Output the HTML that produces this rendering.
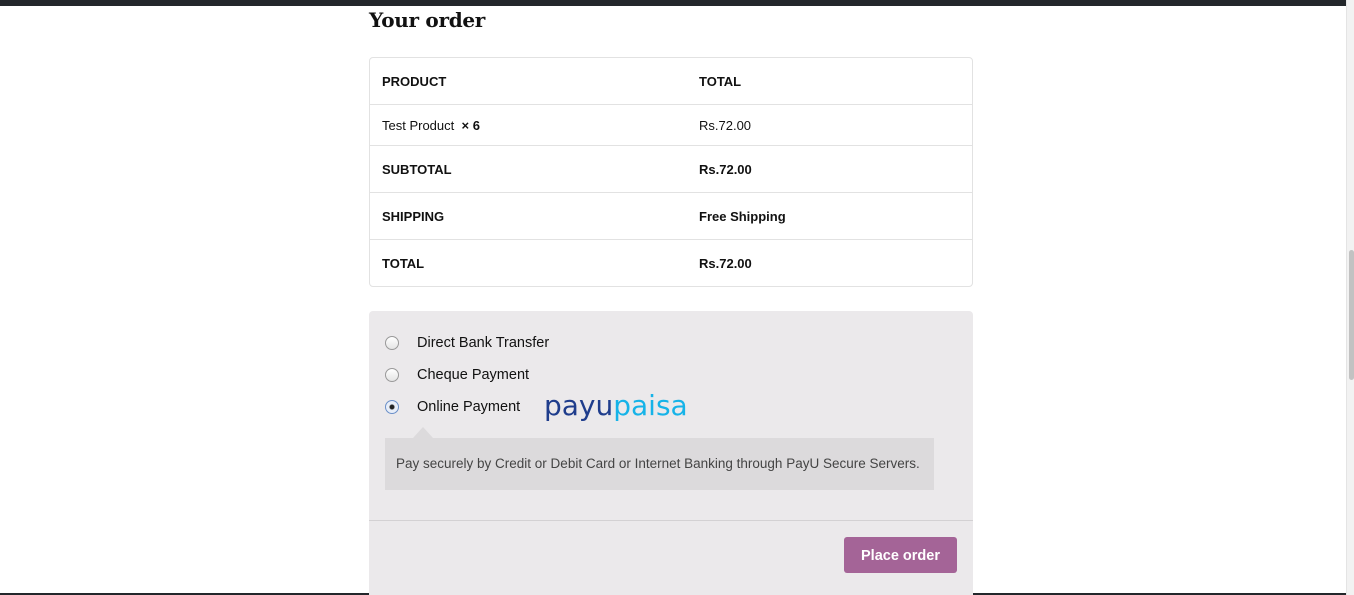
<!DOCTYPE html>
<html><head><meta charset="utf-8"><style>
*{margin:0;padding:0;box-sizing:border-box}
body{width:1354px;height:595px;overflow:hidden;background:#fff;font-family:"Liberation Sans",sans-serif;color:#111;position:relative}
.top{position:absolute;left:0;top:0;width:1346px;height:6px;background:#23272b}
.bot{position:absolute;left:0;top:593px;width:1346px;height:2px;background:#23272b}
.sb{position:absolute;left:1346px;top:0;width:8px;height:595px;background:#f2f2f2;border-left:1px solid #e4e4e4}
.thumb{position:absolute;left:1349px;top:250px;width:5px;height:130px;background:#c2c2c2;border-radius:3px}
h2{position:absolute;left:369px;top:8px;font-family:"DejaVu Serif","Liberation Serif",serif;font-weight:bold;font-size:20px;letter-spacing:-0.3px;color:#111}
.tbl{position:absolute;left:369px;top:57px;width:604px;height:230px;border:1px solid #e2e2e2;border-radius:4px}
.row{position:absolute;left:0;width:602px;border-bottom:1px solid #e2e2e2;font-size:13px}
.row span{position:absolute}
.c1{left:12px}.c2{left:329px}
.b{font-weight:bold}
.pay{position:absolute;left:369px;top:311px;width:604px;height:284px;background:#ebe9eb;border-radius:4px 4px 0 0}
.rad{position:absolute;left:16px;width:14px;height:14px;border-radius:50%;border:1px solid #999;background:linear-gradient(#fff,#e4e4e4)}
.lbl{position:absolute;left:48px;font-size:14.5px;white-space:nowrap}
.box{position:absolute;left:16px;top:127px;width:549px;height:52px;background:#dcdadc;font-size:13.5px;color:#444;padding:18px 11px}
.tri{position:absolute;left:44px;top:116px;width:0;height:0;border-left:10px solid transparent;border-right:10px solid transparent;border-bottom:11px solid #dcdadc}
.sep{position:absolute;left:0;top:209px;width:604px;height:1px;background:#d3d1d3}
.btn{position:absolute;left:475px;top:226px;width:113px;height:36px;background:#a46497;color:#fff;font-weight:bold;font-size:14.5px;text-align:center;line-height:38px;border-radius:3px}
.logo{position:absolute;left:175px;top:78px;font-size:28px;letter-spacing:0;font-family:"DejaVu Sans",sans-serif;white-space:nowrap}
</style></head><body>
<div class="top"></div><div class="bot"></div><div class="sb"></div><div class="thumb"></div>
<h2>Your order</h2>
<div class="tbl">
 <div class="row b" style="top:0;height:47px"><span class="c1" style="top:16px">PRODUCT</span><span class="c2" style="top:16px">TOTAL</span></div>
 <div class="row" style="top:47px;height:41px"><span class="c1" style="top:13px">Test Product&nbsp; <b>× 6</b></span><span class="c2" style="top:13px">Rs.72.00</span></div>
 <div class="row b" style="top:88px;height:47px"><span class="c1" style="top:16px">SUBTOTAL</span><span class="c2" style="top:16px">Rs.72.00</span></div>
 <div class="row b" style="top:135px;height:47px"><span class="c1" style="top:16px">SHIPPING</span><span class="c2" style="top:16px">Free Shipping</span></div>
 <div class="row b" style="top:182px;height:47px;border-bottom:none"><span class="c1" style="top:16px">TOTAL</span><span class="c2" style="top:16px">Rs.72.00</span></div>
</div>
<div class="pay">
 <div class="rad" style="top:25px"></div><div class="lbl" style="top:24px">Direct Bank Transfer</div>
 <div class="rad" style="top:57px"></div><div class="lbl" style="top:56px">Cheque Payment</div>
 <div class="rad" style="top:89px;border-color:#6a8fc8;background:radial-gradient(circle,#222 0 2px,#e8eef8 3px)"></div><div class="lbl" style="top:88px">Online Payment</div>
 <div class="logo"><span style="color:#1f3d8c">payu</span><span style="color:#16b3e8">paisa</span></div>
 <div class="tri"></div>
 <div class="box">Pay securely by Credit or Debit Card or Internet Banking through PayU Secure Servers.</div>
 <div class="sep"></div>
 <div class="btn">Place order</div>
</div>
</body></html>
